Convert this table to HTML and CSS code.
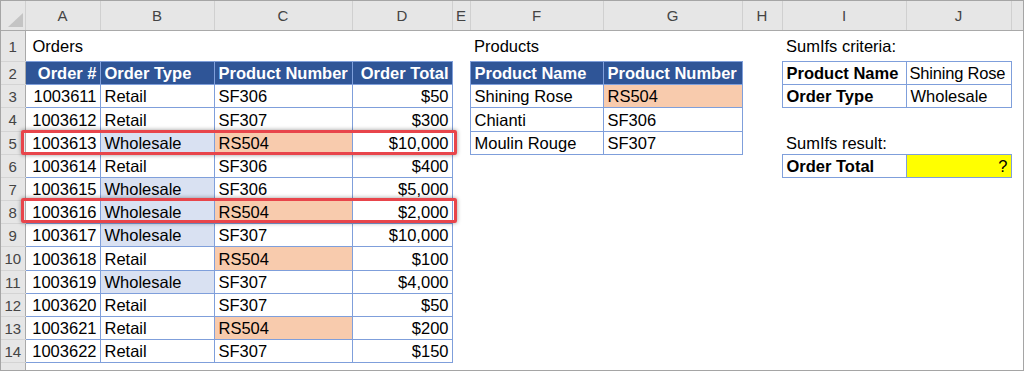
FILE: index.html
```html
<!DOCTYPE html>
<html lang="en">

<head>
    <meta charset="UTF-8">
    <title>SumIfs example</title>
    <link rel="stylesheet" href="styles.css">
</head>

<body>
    <div class="janela">
        <table class="planilha">
            <colgroup>
                <col style="width: 24px">
                <col style="width: 75px">
                <col style="width: 114px">
                <col style="width: 138px">
                <col style="width: 100px">
                <col style="width: 18px">
                <col style="width: 133px">
                <col style="width: 139px">
                <col style="width: 40px">
                <col style="width: 124px">
                <col style="width: 105px">
                <col style="width: 40px">
            </colgroup>
            <tr class="letras">
                <th class="canto"><span class="triangulo"></span></th>
                <th>A</th><th>B</th><th>C</th><th>D</th><th>E</th><th>F</th><th>G</th><th>H</th><th>I</th><th>J</th><th></th>
            </tr>
            <tr class="titulo">
                <th class="num">1</th>
                <td class="recuo">Orders</td><td></td><td></td><td></td><td></td>
                <td>Products</td><td></td><td></td>
                <td>SumIfs criteria:</td><td></td><td></td>
            </tr>
            <tr>
                <th class="num">2</th>
                <td class="cab dir">Order #</td><td class="cab">Order Type</td><td class="cab">Product Number</td><td class="cab dir">Order Total</td>
                <td></td>
                <td class="cab">Product Name</td><td class="cab">Product Number</td>
                <td></td>
                <td class="caixa forte">Product Name</td><td class="caixa justo">Shining Rose</td><td></td>
            </tr>
            <tr>
                <th class="num">3</th>
                <td class="caixa dir">1003611</td><td class="caixa">Retail</td><td class="caixa">SF306</td><td class="caixa dir">$50</td>
                <td></td>
                <td class="caixa">Shining Rose</td><td class="caixa pessego">RS504</td>
                <td></td>
                <td class="caixa forte">Order Type</td><td class="caixa">Wholesale</td><td></td>
            </tr>
            <tr class="alta">
                <th class="num">4</th>
                <td class="caixa dir">1003612</td><td class="caixa">Retail</td><td class="caixa">SF307</td><td class="caixa dir">$300</td>
                <td></td>
                <td class="caixa">Chianti</td><td class="caixa">SF306</td>
                <td></td><td></td><td></td><td></td>
            </tr>
            <tr>
                <th class="num">5</th>
                <td class="caixa dir">1003613</td><td class="caixa lilas">Wholesale</td><td class="caixa pessego">RS504</td><td class="caixa dir">$10,000</td>
                <td></td>
                <td class="caixa">Moulin Rouge</td><td class="caixa">SF307</td>
                <td></td>
                <td>SumIfs result:</td><td></td><td></td>
            </tr>
            <tr>
                <th class="num">6</th>
                <td class="caixa dir">1003614</td><td class="caixa">Retail</td><td class="caixa">SF306</td><td class="caixa dir">$400</td>
                <td></td><td></td><td></td><td></td>
                <td class="caixa forte">Order Total</td><td class="caixa amarelo dir">?</td><td></td>
            </tr>
            <tr>
                <th class="num">7</th>
                <td class="caixa dir">1003615</td><td class="caixa lilas">Wholesale</td><td class="caixa">SF306</td><td class="caixa dir">$5,000</td>
                <td></td><td></td><td></td><td></td><td></td><td></td><td></td>
            </tr>
            <tr>
                <th class="num">8</th>
                <td class="caixa dir">1003616</td><td class="caixa lilas">Wholesale</td><td class="caixa pessego">RS504</td><td class="caixa dir">$2,000</td>
                <td></td><td></td><td></td><td></td><td></td><td></td><td></td>
            </tr>
            <tr>
                <th class="num">9</th>
                <td class="caixa dir">1003617</td><td class="caixa lilas">Wholesale</td><td class="caixa">SF307</td><td class="caixa dir">$10,000</td>
                <td></td><td></td><td></td><td></td><td></td><td></td><td></td>
            </tr>
            <tr class="alta">
                <th class="num">10</th>
                <td class="caixa dir">1003618</td><td class="caixa">Retail</td><td class="caixa pessego">RS504</td><td class="caixa dir">$100</td>
                <td></td><td></td><td></td><td></td><td></td><td></td><td></td>
            </tr>
            <tr>
                <th class="num">11</th>
                <td class="caixa dir">1003619</td><td class="caixa lilas">Wholesale</td><td class="caixa">SF307</td><td class="caixa dir">$4,000</td>
                <td></td><td></td><td></td><td></td><td></td><td></td><td></td>
            </tr>
            <tr>
                <th class="num">12</th>
                <td class="caixa dir">1003620</td><td class="caixa">Retail</td><td class="caixa">SF307</td><td class="caixa dir">$50</td>
                <td></td><td></td><td></td><td></td><td></td><td></td><td></td>
            </tr>
            <tr>
                <th class="num">13</th>
                <td class="caixa dir">1003621</td><td class="caixa">Retail</td><td class="caixa pessego">RS504</td><td class="caixa dir">$200</td>
                <td></td><td></td><td></td><td></td><td></td><td></td><td></td>
            </tr>
            <tr>
                <th class="num">14</th>
                <td class="caixa dir">1003622</td><td class="caixa">Retail</td><td class="caixa">SF307</td><td class="caixa dir">$150</td>
                <td></td><td></td><td></td><td></td><td></td><td></td><td></td>
            </tr>
            <tr>
                <th class="num"></th>
                <td></td><td></td><td></td><td></td><td></td><td></td><td></td><td></td><td></td><td></td><td></td>
            </tr>
        </table>

        <!-- linhas marcadas em vermelho -->
        <div class="destaque linha5"></div>
        <div class="destaque linha8"></div>
    </div>
</body>

</html>
```

FILE: styles.css
```css
body {
    margin: 0;
    padding: 0;
    background: #ffffff;
    font-family: 'Liberation Sans', Arial, sans-serif;
}

.janela {
    position: relative;
    width: 1024px;
    height: 371px;
    box-sizing: border-box;
    border: 1px solid #a5a5a5;
    overflow: hidden;
    background: #ffffff;
}

.planilha {
    border-collapse: collapse;
    table-layout: fixed;
    width: 1050px;
    font-size: 16.5px;
    color: #000000;
}

.planilha td {
    height: 23px;
    padding: 0 3px 0 4px;
    white-space: nowrap;
    line-height: 18px;
    box-sizing: border-box;
}

.planilha .alta td {
    height: 24px;
}

.planilha .justo {
    padding-left: 3px;
    padding-right: 0;
    letter-spacing: -0.2px;
}

.letras th {
    height: 29px;
    background: #e6e6e6;
    color: #444444;
    font-weight: normal;
    font-size: 15px;
    border-right: 1px solid #d0d0d0;
    border-bottom: 1px solid #a9a9a9;
    padding: 0;
}

.canto {
    position: relative;
}

.triangulo {
    position: absolute;
    right: 2px;
    bottom: 3px;
    width: 0;
    height: 0;
    border-left: 15px solid transparent;
    border-bottom: 14px solid #c4c4c4;
}

.num {
    background: #e6e6e6;
    color: #444444;
    font-weight: normal;
    font-size: 15px;
    padding: 0;
    text-align: center;
    border-right: 1px solid #a9a9a9;
    border-bottom: 1px solid #d4d4d4;
}

.planilha .titulo td {
    height: 31px;
}

.planilha .recuo {
    padding-left: 7px;
}

.caixa {
    border: 1px solid #7f9fdb;
}

.cab {
    background: #2f5597;
    color: #ffffff;
    font-weight: bold;
    border: 1px solid #7f9fdb;
}

.dir {
    text-align: right;
}

.forte {
    font-weight: bold;
}

.lilas {
    background: #d9e1f2;
}

.pessego {
    background: #f8cbad;
}

.amarelo {
    background: #ffff00;
}

.destaque {
    position: absolute;
    left: 20px;
    width: 430px;
    height: 19px;
    border: 3px solid #e8454b;
    border-radius: 2px;
    box-shadow: 0 0 4px rgba(0, 0, 0, 0.4);
    pointer-events: none;
}

.linha5 {
    top: 129px;
}

.linha8 {
    top: 197px;
}
```
